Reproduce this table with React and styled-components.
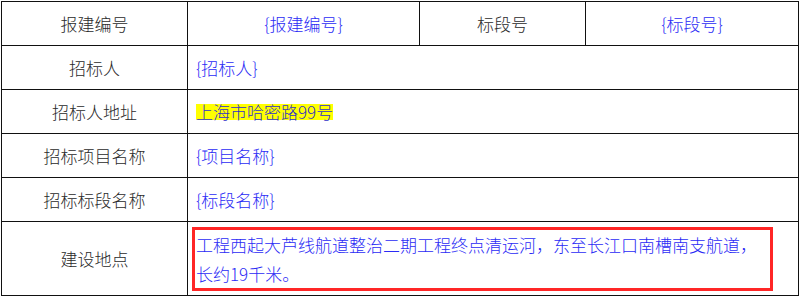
import React from "react";
import styled, { createGlobalStyle } from "styled-components";

const GlobalStyle = createGlobalStyle`
  body {
    margin: 0;
    background: #fff;
    font-family: "Noto Sans CJK SC", "Noto Sans", sans-serif;
  }
`;

const Page = styled.div`
  padding: 1px 0 0 1px;
`;

const Table = styled.table`
  width: 797px;
  table-layout: fixed;
  border-collapse: collapse;
  font-size: 17px;
  font-weight: 300;
`;

const Row = styled.tr`
  height: ${p => p.h || 44}px;
`;

const Label = styled.td`
  border: 1px solid #111;
  text-align: center;
  vertical-align: middle;
  color: #2a2a2a;
  padding: 0;
`;

const Value = styled.td`
  border: 1px solid #111;
  text-align: ${p => (p.center ? "center" : "left")};
  vertical-align: middle;
  color: #2b2bf5;
  padding: 0 0 0 8px;
  ${p => p.center && "padding: 0;"}
`;

const Highlight = styled.span`
  background: #ffff00;
  color: #3030c8;
  line-height: 16px;
  display: inline-block;
`;

const Marked = styled.div`
  border: 3px solid #ff2626;
  margin: 0 25px 0 -4px;
  padding: 0 2px 0 1px;
  line-height: 29px;
`;

const rows = [
  { label: "招标人", value: "{招标人}" },
  { label: "招标人地址", value: <Highlight>上海市哈密路99号</Highlight> },
  { label: "招标项目名称", value: "{项目名称}" },
  { label: "招标标段名称", value: "{标段名称}" },
];

const App = () => (
  <Page>
    <GlobalStyle />
    <Table>
      <colgroup>
        <col style={{ width: 186 }} />
        <col style={{ width: 232 }} />
        <col style={{ width: 166 }} />
        <col style={{ width: 213 }} />
      </colgroup>
      <tbody>
        <Row h={44}>
          <Label>报建编号</Label>
          <Value center>{"{报建编号}"}</Value>
          <Label>标段号</Label>
          <Value center>{"{标段号}"}</Value>
        </Row>
        {rows.map(r => (
          <Row key={r.label} h={44}>
            <Label>{r.label}</Label>
            <Value colSpan={3}>{r.value}</Value>
          </Row>
        ))}
        <Row h={74}>
          <Label>建设地点</Label>
          <Value colSpan={3}>
            <Marked>
              工程西起大芦线航道整治二期工程终点清运河，东至长江口南槽南支航道，长约19千米。
            </Marked>
          </Value>
        </Row>
      </tbody>
    </Table>
  </Page>
);

export default App;
